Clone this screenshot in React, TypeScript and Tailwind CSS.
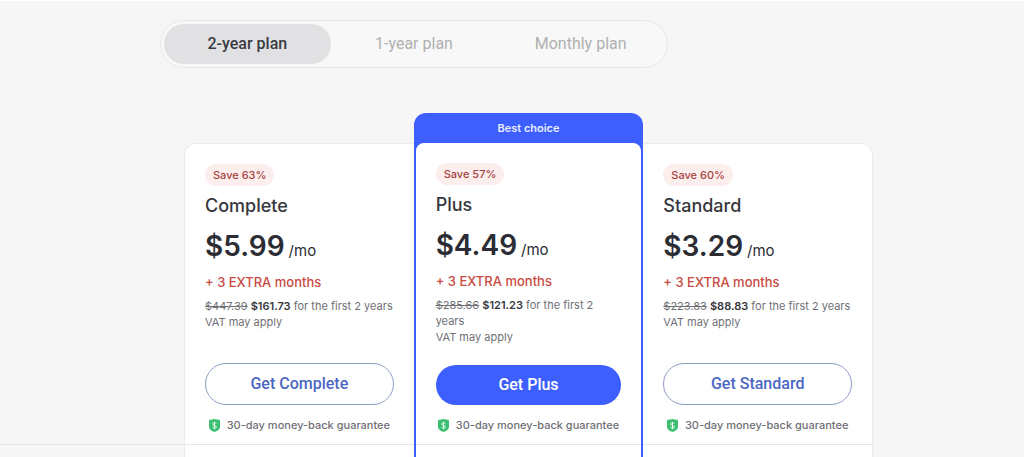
import { useState } from 'react';

const terms = ['2-year plan', '1-year plan', 'Monthly plan'];

const plans = [
  { name: 'Complete', save: 63, price: '5.99', before: '447.39', total: '161.73', best: false },
  { name: 'Plus', save: 57, price: '4.49', before: '285.66', total: '121.23', best: true },
  { name: 'Standard', save: 60, price: '3.29', before: '223.83', total: '88.83', best: false },
];

function ShieldIcon() {
  return (
    <svg width="11" height="13" viewBox="0 0 22 26" aria-hidden="true">
      <path d="M11 0c3 .8 6 1.200 8.500 1.400 1.500.1 2.500 1 2.500 2.400V15c0 6-5 9-11 11C5 24 0 21 0 15V3.800c0-1.400 1-2.300 2.500-2.400C5 1.200 8 .8 11 0Z" fill="#3cbf72" />
      <path d="M14.500 9.500c-.6-1.300-1.800-2-3.500-2-2 0-3.500 1-3.500 2.600 0 3.800 7.200 2 7.200 5.800 0 1.600-1.600 2.600-3.700 2.600-1.900 0-3.200-.8-3.800-2.200M11 5.500v15" fill="none" stroke="#e9faf0" strokeWidth="2" />
    </svg>
  );
}

function PlanCard({ plan }: { plan: (typeof plans)[number] }) {
  return (
    <article
      className={
        plan.best
          ? 'flex flex-col rounded-t-xl bg-[#3e5fff] px-[2px]'
          : 'mt-[30px] flex flex-col border-t border-[#ebebec] bg-white first:rounded-tl-xl first:border-l last:rounded-tr-xl last:border-r'
      }
    >
      {plan.best && (
        <p className="flex h-[30px] items-center justify-center text-[11px] font-semibold text-[#e8edff]">Best choice</p>
      )}
      <div className={plan.best ? 'flex flex-1 flex-col rounded-t-lg bg-white' : 'flex flex-1 flex-col'}>
        <div className={plan.best ? 'flex h-[301px] flex-col items-start px-5 pt-5' : 'flex h-[300px] flex-col items-start px-5 pt-5'}>
          <span className="rounded-full bg-[#fdeeee] px-2 text-[11px] leading-[22px] font-medium text-[#a5433f]">
            {`Save ${plan.save}%`}
          </span>
          <h2 className="mt-1 text-[18px] leading-8 font-medium text-[#36373d]">{plan.name}</h2>
          <p className="mt-1 flex h-10 items-baseline gap-1 text-[#2b2c34]">
            <span className="text-[28px] leading-10 font-semibold">{`$${plan.price}`}</span>
            <span className="text-[15px] leading-4">/mo</span>
          </p>
          <p className="text-[13px] leading-8 font-medium text-[#c94a43]">+ 3 EXTRA months</p>
          <p className="text-[11px] leading-4 text-[#6f7076]">
            <s>{`$${plan.before}`}</s> <strong className="font-semibold text-[#36373d]">{`$${plan.total}`}</strong> for the first 2 years
            <br />
            VAT may apply
          </p>
          <div className="mt-auto w-full pb-[11px]">
            <button
              type="button"
              className={
                plan.best
                  ? "h-10 w-full rounded-full bg-[#3e5fff] font-['Roboto',sans-serif] text-[16px] font-medium text-white"
                  : "h-[42px] w-full rounded-full border border-[#8f9fc9] font-['Roboto',sans-serif] text-[16px] font-medium text-[#4b67c3]"
              }
            >
              {`Get ${plan.name}`}
            </button>
            <p className="mt-3 flex items-center justify-center gap-[7px] text-[11px] leading-4 font-medium whitespace-nowrap text-[#6f7076]">
              <ShieldIcon />
              30-day money-back guarantee
            </p>
          </div>
        </div>
        <div className="min-h-3 flex-1 border-t border-[#e5e6ea]" />
      </div>
    </article>
  );
}

export default function App() {
  const [term, setTerm] = useState(terms[0]);

  return (
    <main className="flex min-h-screen flex-col border-t border-white bg-[#f6f6f6] pt-[19px] font-['Inter',sans-serif]">
      {/* Billing term */}
      <div className="ml-40 grid max-w-[508px] grid-cols-3 rounded-full border border-[#e9e9ea] bg-[#f8f8f8] p-[3px]">
        {terms.map((item) => (
          <button
            key={item}
            type="button"
            aria-pressed={item === term}
            onClick={() => setTerm(item)}
            className={
              item === term
                ? "h-10 rounded-full bg-[#e1e1e4] font-['Roboto',sans-serif] text-[16px] font-medium text-[#3a3a42]"
                : "h-10 rounded-full font-['Roboto',sans-serif] text-[16px] text-[#b0b0b2]"
            }
          >
            {item}
          </button>
        ))}
      </div>

      {/* Plans */}
      <div className="mt-[45px] flex flex-1">
        <div className="mt-[331px] w-46 shrink-0 border-t border-[#e3e3e4]" />
        <section className="grid max-w-[689px] flex-1 grid-cols-3">
          {plans.map((plan) => (
            <PlanCard key={plan.name} plan={plan} />
          ))}
        </section>
      </div>
    </main>
  );
}
